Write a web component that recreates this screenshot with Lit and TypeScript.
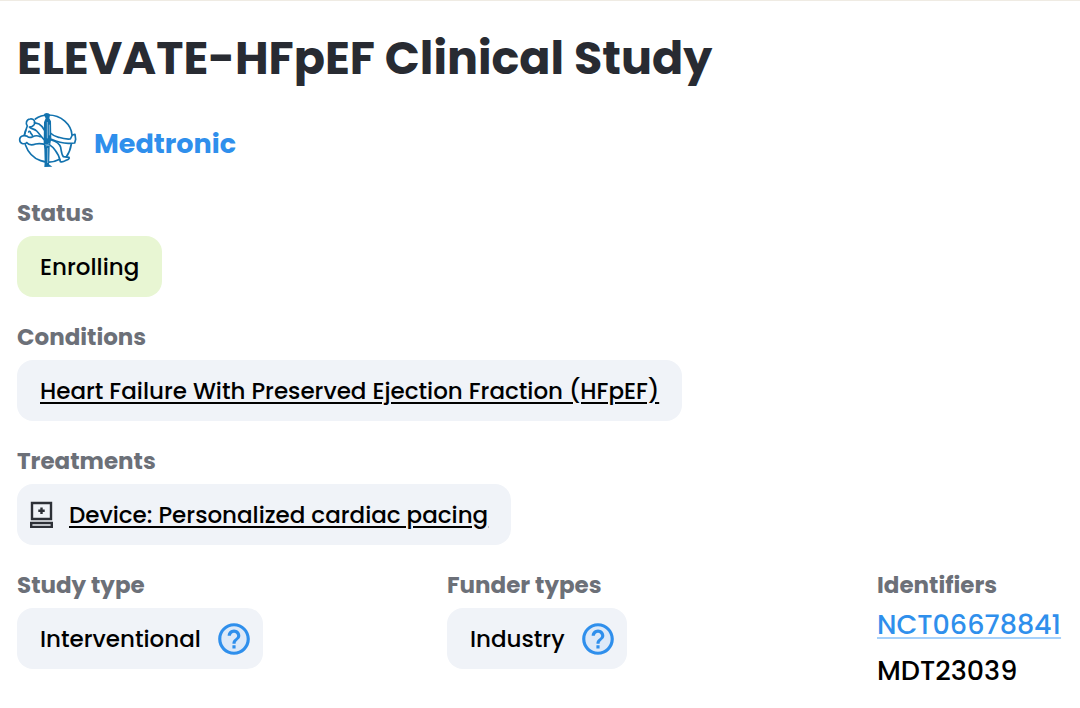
import { LitElement, html, css, svg } from "lit";
import { customElement, property } from "lit/decorators.js";

@customElement("info-button")
export class InfoButton extends LitElement {
  @property() label = "";

  static styles = css`
    :host {
      display: flex;
    }
    .info {
      display: flex;
      padding: 0;
      border: 0;
      background: none;
      color: #2f8fec;
      cursor: pointer;
    }
    .glyph {
      width: 38px;
      height: 38px;
    }
  `;

  render() {
    return html`<button class="info" type="button" aria-label=${this.label}>
      <svg class="glyph" viewBox="0 0 24 24" aria-hidden="true">
        <circle cx="12" cy="12" r="9" fill="#dde9f8" />
        <path
          fill="currentColor"
          d="M11 18h2v-2h-2v2zm1-16C6.48 2 2 6.48 2 12s4.48 10 10 10 10-4.48 10-10S17.52 2 12 2zm0 18c-4.41 0-8-3.590-8-8s3.590-8 8-8 8 3.590 8 8-3.590 8-8 8zm0-14c-2.210 0-4 1.790-4 4h2c0-1.100.9-2 2-2s2 .9 2 2c0 2-3 1.750-3 5h2c0-2.250 3-2.500 3-5 0-2.210-1.790-4-4-4z"
        />
      </svg>
    </button>`;
  }
}

const sponsorLogo = svg`
  <g fill="none" stroke="#1272ae" stroke-width="5" stroke-linejoin="round" stroke-linecap="round">
    <path d="M76 42C88 33 101 30 115 30C154 30 184 59 186 90M184 117C181 136 175 147 169 155M149 163C116 181 64 170 46 119M44 88L47 76"/>
    <path d="M52 63C46 56 49 43 60 42C71 40 77 49 73 58C70 63 64 66 58 66M73 53L87 57C94 61 99 68 103 75M51 65L43 89M56 81C58 77 61 79 62 84L67 91M60 68C66 72 74 72 80 78C88 86 96 98 106 108"/>
    <path d="M52 94C42 89 29 93 29 104C29 115 41 120 51 113M52 94C56 98 62 98 68 95C74 92 82 91 91 95M50 113C57 121 66 121 77 117C88 114 97 116 106 118"/>
    <path d="M121 84C128 91 134 94 146 97C158 101 170 103 181 102L187 90L195 88L197 103L194 114L179 115C161 116 142 111 124 103"/>
    <path d="M124 105C137 109 149 116 152 127C154 138 154 148 160 155L177 157C180 161 174 164 168 166C163 169 158 173 151 170C149 156 143 145 135 135C130 128 124 123 118 119"/>
  </g>
  <path fill="#1272ae" d="M102 31C101 22 119 22 120 31L118 40L123 49L124 101L119 126L118 166L117 178L127 185L103 186L104 172L103 133L101 114L102 52L107 40Z"/>
  <path fill="none" stroke="#86b8da" stroke-width="3" d="M112 51V100M118 59V91M106 119L119 122M109 124L117 115M113 129V174"/>
`;

const deviceIcon = html`<svg class="device" viewBox="0 0 24 27" aria-hidden="true">
  <path fill="none" stroke="#2d3037" stroke-width="2.400" d="M2 2H21V18H2ZM1.200 22H21.800V26H1.200Z" />
  <path fill="none" stroke="#2d3037" stroke-width="2.400" d="M11.500 6.500V13M8.300 9.800H14.700" />
</svg>`;

@customElement("app-root")
export class AppRoot extends LitElement {
  static styles = css`
    :host {
      display: block;
      font-family: Poppins, Inter, sans-serif;
      color: #000;
    }
    * {
      box-sizing: border-box;
    }
    .study {
      border-top: 1px solid #efebe3;
      padding: 24px 17px 16px;
    }
    .title {
      margin: 0;
      font-size: 46px;
      line-height: 67px;
      font-weight: 700;
      color: #282b32;
    }
    .sponsor {
      display: flex;
      align-items: flex-end;
      gap: 16px;
      margin: 20px 0 24px;
    }
    .logo {
      width: 61px;
      height: 57px;
    }
    .sponsor-name {
      font-size: 27px;
      line-height: 50px;
      font-weight: 700;
      color: #2f8fec;
      text-decoration: none;
    }
    .fields {
      display: flex;
      flex-direction: column;
      gap: 20px;
    }
    .columns {
      display: grid;
      grid-template-columns: minmax(0, 1fr) minmax(0, 1fr) 186px;
    }
    .field {
      display: flex;
      flex-direction: column;
      align-items: flex-start;
      gap: 3px;
    }
    .label {
      margin: 0;
      font-size: 23px;
      line-height: 40px;
      font-weight: 700;
      color: #6c7078;
    }
    .chip {
      display: flex;
      align-items: center;
      min-height: 61px;
      padding: 0 23px;
      border-radius: 16px;
      background: #f0f3f8;
      font-size: 23px;
      line-height: 36px;
      font-weight: 500;
    }
    .enrolling {
      background: #e8f6d3;
    }
    .with-device {
      gap: 15px;
      padding-left: 13px;
    }
    .with-info {
      gap: 14px;
      padding-right: 10px;
    }
    .device {
      width: 24px;
      height: 27px;
    }
    .chip-link {
      color: inherit;
      text-decoration: underline;
      text-decoration-thickness: 2px;
      text-underline-offset: 3px;
    }
    .identifiers {
      display: flex;
      flex-direction: column;
      align-items: flex-start;
      gap: 12px;
      font-size: 27px;
      line-height: 34px;
      font-weight: 500;
    }
    .registry {
      color: #2f8fec;
      text-decoration: underline;
      text-decoration-color: #a6d1fb;
      text-decoration-thickness: 2px;
      text-underline-offset: 3px;
    }
  `;

  render() {
    return html`<main class="study">
      <h1 class="title">ELEVATE-HFpEF Clinical Study</h1>
      <div class="sponsor">
        <svg class="logo" viewBox="21 21 183 171" aria-hidden="true">${sponsorLogo}</svg>
        <a class="sponsor-name" href="#sponsor">Medtronic</a>
      </div>
      <div class="fields">
        <section class="field">
          <h2 class="label">Status</h2>
          <div class="chip enrolling">Enrolling</div>
        </section>
        <section class="field">
          <h2 class="label">Conditions</h2>
          <div class="chip">
            <a class="chip-link" href="#condition">Heart Failure With Preserved Ejection Fraction (HFpEF)</a>
          </div>
        </section>
        <section class="field">
          <h2 class="label">Treatments</h2>
          <div class="chip with-device">
            ${deviceIcon}
            <a class="chip-link" href="#treatment">Device: Personalized cardiac pacing</a>
          </div>
        </section>
        <div class="columns">
          <section class="field">
            <h2 class="label">Study type</h2>
            <div class="chip with-info">
              Interventional <info-button label="About study types"></info-button>
            </div>
          </section>
          <section class="field">
            <h2 class="label">Funder types</h2>
            <div class="chip with-info">
              Industry <info-button label="About funder types"></info-button>
            </div>
          </section>
          <section class="field">
            <h2 class="label">Identifiers</h2>
            <div class="identifiers">
              <a class="registry" href="#registry">NCT06678841</a>
              <span>MDT23039</span>
            </div>
          </section>
        </div>
      </div>
    </main>`;
  }
}
